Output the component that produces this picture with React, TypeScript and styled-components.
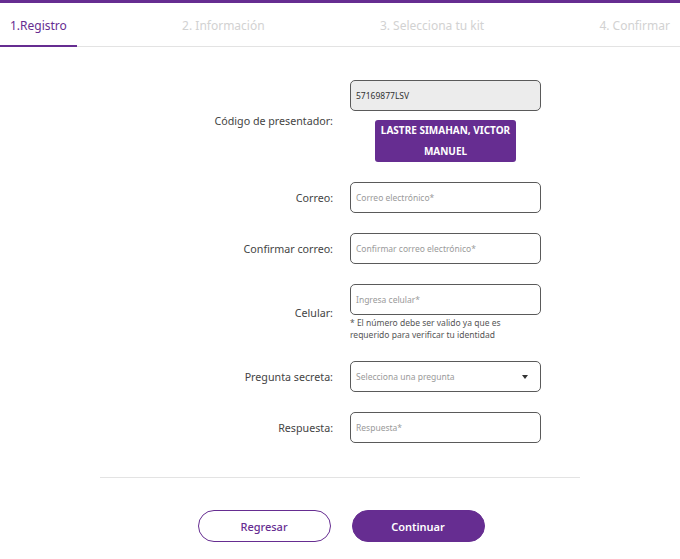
import styled, { createGlobalStyle } from 'styled-components'

const purple = '#662d91'

const GlobalStyle = createGlobalStyle`
    body {
        margin: 0;
        background: #fff;
        font-family: "Noto Sans", "Open Sans", sans-serif;
    }
`

const Page = styled.div`
    border-top: 3px solid ${purple};
    width: 680px;
`

const Tabs = styled.div`
    display: flex;
    justify-content: space-between;
    border-bottom: 1px solid #e3e3e3;
    height: 43px;
`

const Tab = styled.div<{ active?: boolean }>`
    padding: 3px 10px 0;
    display: flex;
    align-items: center;
    font-size: 12px;
    color: ${p => p.active ? purple : '#d2d2d2'};
    border-bottom: 2px solid ${p => p.active ? purple : 'transparent'};
    margin-bottom: -1px;
`

const Form = styled.div`
    width: 480px;
    margin: 33px auto 0;
    padding-left: 2px;
    display: grid;
    grid-template-columns: 232px 191px;
    column-gap: 17px;
    row-gap: 20px;
`

const Label = styled.div`
    text-align: right;
    align-self: center;
    font-size: 10.7px;
    color: #444;
`

const Field = styled.div`
    display: flex;
    flex-direction: column;
`

const Input = styled.div<{ filled?: boolean }>`
    height: 31px;
    box-sizing: border-box;
    border: 1px solid #5a5a5a;
    border-radius: 5px;
    background: ${p => p.filled ? '#ececec' : '#fff'};
    display: flex;
    align-items: center;
    justify-content: space-between;
    padding: 0 12px 0 5px;
    font-size: 8.5px;
    color: ${p => p.filled ? '#333' : '#9a9a9a'};
`

const Caret = styled.span`
    width: 0;
    height: 0;
    border-left: 3px solid transparent;
    border-right: 3px solid transparent;
    border-top: 4px solid #333;
`

const Presenter = styled.div`
    align-self: center;
    margin-top: 9px;
    width: 141px;
    height: 42px;
    background: ${purple};
    border-radius: 3px;
    color: #fff;
    font-weight: 700;
    font-size: 10px;
    line-height: 21px;
    text-align: center;
`

const Helper = styled.div`
    font-size: 8.5px;
    color: #555;
    line-height: 12px;
    margin-top: 2px;
    padding-right: 20px;
`

const Divider = styled.hr`
    width: 480px;
    margin: 34px auto 0;
    border: none;
    border-top: 1px solid #e3e3e3;
`

const Buttons = styled.div`
    display: flex;
    justify-content: center;
    gap: 21px;
    margin-top: 32px;
    padding-left: 2px;
`

const Button = styled.button<{ primary?: boolean }>`
    width: 133px;
    height: 32px;
    border-radius: 16px;
    border: 1px solid ${purple};
    background: ${p => p.primary ? purple : '#fff'};
    color: ${p => p.primary ? '#fff' : purple};
    font-family: inherit;
    font-weight: ${p => p.primary ? 600 : 500};
    font-size: 11px;
`

const rows = [
    { label: 'Correo:', placeholder: 'Correo electrónico*' },
    { label: 'Confirmar correo:', placeholder: 'Confirmar correo electrónico*' },
]

export default function App() {
    return (<>
        <GlobalStyle />
        <Page>
            <Tabs>
                <Tab active>1.Registro</Tab>
                <Tab>2. Información</Tab>
                <Tab>3. Selecciona tu kit</Tab>
                <Tab>4. Confirmar</Tab>
            </Tabs>
            <Form>
                <Label>Código de presentador:</Label>
                <Field>
                    <Input filled>57169877LSV</Input>
                    <Presenter>LASTRE SIMAHAN, VICTOR<br />MANUEL</Presenter>
                </Field>
                {rows.map(r => <>
                    <Label key={r.label}>{r.label}</Label>
                    <Field><Input>{r.placeholder}</Input></Field>
                </>)}
                <Label>Celular:</Label>
                <Field>
                    <Input>Ingresa celular*</Input>
                    <Helper>* El número debe ser valido ya que es requerido para verificar tu identidad</Helper>
                </Field>
                <Label>Pregunta secreta:</Label>
                <Field>
                    <Input>Selecciona una pregunta<Caret /></Input>
                </Field>
                <Label>Respuesta:</Label>
                <Field><Input>Respuesta*</Input></Field>
            </Form>
            <Divider />
            <Buttons>
                <Button>Regresar</Button>
                <Button primary>Continuar</Button>
            </Buttons>
        </Page>
    </>)
}
